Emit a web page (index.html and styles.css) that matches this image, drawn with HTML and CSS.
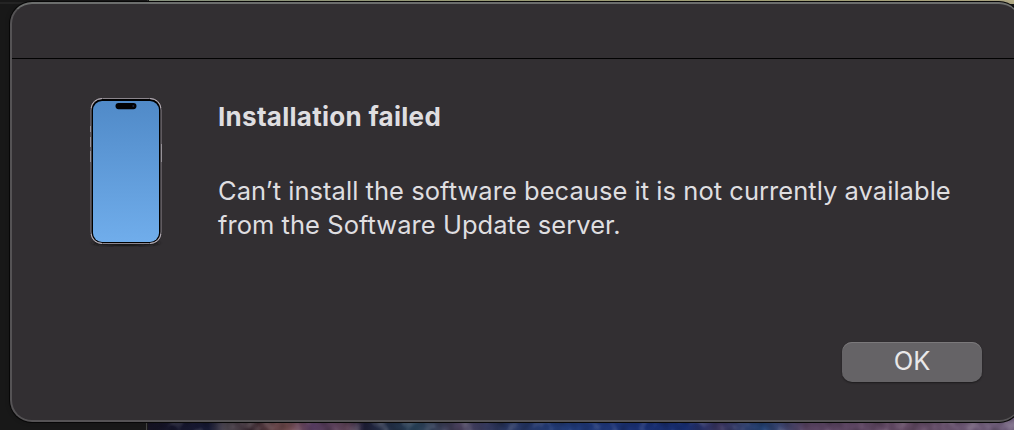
FILE: index.html
```html
<!DOCTYPE html>
<html lang="en">
<head>
<meta charset="utf-8">
<title>Installation failed</title>
<link rel="stylesheet" href="styles.css">
</head>
<body>
<div class="desktop">
  <svg class="wallpaper" viewBox="0 0 866 8" preserveAspectRatio="none" aria-hidden="true">
    <defs>
      <linearGradient id="paint">
        <stop offset="0" stop-color="#151323"/><stop offset=".07" stop-color="#171a35"/>
        <stop offset=".09" stop-color="#57505a"/><stop offset=".12" stop-color="#34242c"/>
        <stop offset=".16" stop-color="#7d5456"/><stop offset=".19" stop-color="#553b60"/>
        <stop offset=".23" stop-color="#62475b"/><stop offset=".25" stop-color="#20213b"/>
        <stop offset=".31" stop-color="#284157"/><stop offset=".36" stop-color="#4b415d"/>
        <stop offset=".41" stop-color="#29365f"/><stop offset=".48" stop-color="#223c79"/>
        <stop offset=".56" stop-color="#1b3174"/><stop offset=".62" stop-color="#172d70"/>
        <stop offset=".66" stop-color="#3c365f"/><stop offset=".71" stop-color="#254476"/>
        <stop offset=".76" stop-color="#5b4564"/><stop offset=".88" stop-color="#654c66"/>
        <stop offset="1" stop-color="#70607d"/>
      </linearGradient>
      <filter id="strokes" x="0" y="0" width="100%" height="100%" color-interpolation-filters="sRGB">
        <feTurbulence type="fractalNoise" baseFrequency=".07 .12" numOctaves="2" seed="7"/>
        <feColorMatrix values="1.2 0 0 0 -.15  1.2 0 0 0 -.15  1.2 0 0 0 -.15  0 0 0 0 1" result="n"/>
        <feBlend in="SourceGraphic" in2="n" mode="overlay" result="b"/>
        <feComposite in="SourceGraphic" in2="b" operator="arithmetic" k2=".75" k3=".25"/>
      </filter>
    </defs>
    <rect width="866" height="8" fill="url(#paint)" filter="url(#strokes)"/>
  </svg>
  <main class="dialog">
    <header class="titlebar"></header>
    <section class="content">
      <svg class="phone" viewBox="0 0 84 156" aria-hidden="true">
        <defs>
          <linearGradient id="screen" x2="0" y2="1"><stop stop-color="#508ac8"/><stop offset="1" stop-color="#70adeb"/></linearGradient>
          <filter id="soft"><feGaussianBlur stdDeviation="2.2 1.3"/></filter>
        </defs>
        <ellipse cx="42" cy="149" rx="33" ry="3" fill="#171619" filter="url(#soft)"/>
        <path d="M6.5 32v6M6.5 43v10M6.5 57v11M77.5 50v18" stroke="#a19ea4"/>
        <rect x="7" y="4.5" width="70" height="145" rx="11.5" fill="#000" stroke="#8b858c"/>
        <path d="M7.1 14Q8.4 5 18 4.5M66 4.5Q75.6 5 76.9 14M7.1 140Q8.4 149 18 149.5M66 149.5Q75.6 149 76.9 140" fill="none" stroke="#b5adb5"/>
        <rect x="9" y="7" width="66" height="141" rx="9" fill="url(#screen)"/>
        <rect x="31.5" y="9" width="21" height="6.2" rx="3.1" fill="#020204"/>
        <circle cx="49.3" cy="12" r="1" fill="#18284a"/>
      </svg>
      <div class="message">
        <h1 class="title">Installation failed</h1>
        <p class="body"><span class="line">Can’t install the software because it is not currently available</span> <span class="line">from the Software Update server.</span></p>
      </div>
    </section>
    <footer class="actions"><button class="button" type="button">OK</button></footer>
  </main>
</div>
</body>
</html>
```
FILE: styles.css
```css
* { box-sizing: border-box; }

body {
  margin: 0;
  overflow: hidden;
  background: #181818;
  color: #dfdee0;
  font-family: Inter, "Liberation Sans", sans-serif;
}

.desktop {
  position: relative;
  width: 1014px;
  height: 430px;
  padding: 2px 0 0 10px;
  overflow: hidden;
  background:
    linear-gradient(90deg, #8f9a86, #a2a47d 35%, #aaa87c 70%, #b5ae88) 149px 0 / 865px 4px no-repeat,
    linear-gradient(#303030, #303030) 147px 0 / 1px 4px no-repeat,
    linear-gradient(#444, #444) 146px 422px / 1px 8px no-repeat,
    linear-gradient(#242424, #242424) 0 2px / 147px 2px no-repeat,
    #181818;
}

/* Parts of the wallpaper that show past the dialog */
.wallpaper {
  position: absolute;
  left: 148px;
  bottom: 0;
  width: 866px;
  height: 14px;
}

.dialog {
  position: relative;
  display: flex;
  flex-direction: column;
  width: 1011px;
  height: 420px;
  border: 2px solid #555355;
  border-right-width: 1px;
  border-top-color: #6c6e6d;
  border-radius: 22px;
  background: #322f32;
  box-shadow: 0 0 0 1px #070707, 0 0 5px rgba(0, 0, 0, .25);
}

.titlebar {
  flex: none;
  height: 55px;
  border-bottom: 1px solid #020202;
}

.content {
  display: flex;
  flex: 1;
  padding: 35px 0 0 72px;
}

.phone {
  flex: none;
  width: 84px;
  height: 156px;
}

.message { padding: 6px 0 0 50px; }

.title {
  margin: 0;
  font-size: 26px;
  font-weight: 700;
  line-height: 34px;
  letter-spacing: .28px;
  white-space: nowrap;
}

.body {
  margin: 40px 0 0;
  font-size: 25.5px;
  font-weight: 430;
  line-height: 34px;
}

.line {
  display: block;
  letter-spacing: .04px;
  white-space: nowrap;
}

.actions {
  display: flex;
  justify-content: flex-end;
  padding: 0 38px 38px 0;
}

.button {
  width: 140px;
  height: 40px;
  padding: 0 0 2px;
  border: 0;
  border-radius: 10px;
  background: #656366;
  box-shadow: inset 0 1px #7b797b, 0 1px 2px rgba(0, 0, 0, .45);
  color: #e9e8e9;
  font: 430 25.5px/36px Inter, "Liberation Sans", sans-serif;
}
```
